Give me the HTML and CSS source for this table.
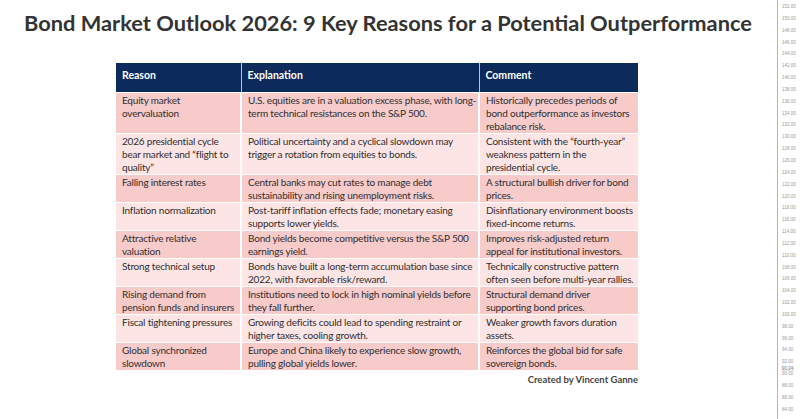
FILE: index.html
```html
<!DOCTYPE html>
<html lang="en">
<head>
<meta charset="utf-8">
<title>Bond Market Outlook 2026</title>
<link rel="stylesheet" href="styles.css">
</head>
<body>
<div class="page">
  <main class="content">
    <h1 class="title">Bond Market Outlook 2026: 9 Key Reasons for a Potential Outperformance</h1>
    <div class="table-wrap">
      <table class="reasons">
        <colgroup><col class="c1"><col class="c2"><col class="c3"></colgroup>
        <thead>
          <tr><th>Reason</th><th>Explanation</th><th>Comment</th></tr>
        </thead>
        <tbody>
          <tr class="dark"><td>Equity market<br>overvaluation</td><td>U.S. equities are in a valuation excess phase, with long-<br>term technical resistances on the S&amp;P 500.</td><td>Historically precedes periods of<br>bond outperformance as investors<br>rebalance risk.</td></tr>
          <tr class="light"><td>2026 presidential cycle<br>bear market and “flight to<br>quality”</td><td>Political uncertainty and a cyclical slowdown may<br>trigger a rotation from equities to bonds.</td><td>Consistent with the “fourth-year”<br>weakness pattern in the<br>presidential cycle.</td></tr>
          <tr class="dark"><td>Falling interest rates</td><td>Central banks may cut rates to manage debt<br>sustainability and rising unemployment risks.</td><td>A structural bullish driver for bond<br>prices.</td></tr>
          <tr class="light"><td>Inflation normalization</td><td>Post-tariff inflation effects fade; monetary easing<br>supports lower yields.</td><td>Disinflationary environment boosts<br>fixed-income returns.</td></tr>
          <tr class="dark"><td>Attractive relative<br>valuation</td><td>Bond yields become competitive versus the S&amp;P 500<br>earnings yield.</td><td>Improves risk-adjusted return<br>appeal for institutional investors.</td></tr>
          <tr class="light"><td>Strong technical setup</td><td>Bonds have built a long-term accumulation base since<br>2022, with favorable risk/reward.</td><td>Technically constructive pattern<br>often seen before multi-year rallies.</td></tr>
          <tr class="dark"><td>Rising demand from<br>pension funds and insurers</td><td>Institutions need to lock in high nominal yields before<br>they fall further.</td><td>Structural demand driver<br>supporting bond prices.</td></tr>
          <tr class="light"><td>Fiscal tightening pressures</td><td>Growing deficits could lead to spending restraint or<br>higher taxes, cooling growth.</td><td>Weaker growth favors duration<br>assets.</td></tr>
          <tr class="dark"><td>Global synchronized<br>slowdown</td><td>Europe and China likely to experience slow growth,<br>pulling global yields lower.</td><td>Reinforces the global bid for safe<br>sovereign bonds.</td></tr>
        </tbody>
      </table>
      <p class="credit">Created by Vincent Ganne</p>
    </div>
  </main>
  <aside class="axis">
    <span>152.00</span><span>150.00</span><span>148.00</span><span>146.00</span><span>144.00</span>
    <span>142.00</span><span>140.00</span><span>138.00</span><span>136.00</span><span>134.00</span>
    <span>132.00</span><span>130.00</span><span>128.00</span><span>126.00</span><span>124.00</span>
    <span>122.00</span><span>120.00</span><span>118.00</span><span>116.00</span><span>114.00</span>
    <span>112.00</span><span>110.00</span><span>108.00</span><span>106.00</span><span>104.00</span>
    <span>102.00</span><span>100.00</span><span>98.00</span><span>96.00</span><span>94.00</span>
    <span>92.00</span><span>90.00</span><span>88.00</span><span>86.00</span><span>84.00</span>
    <em class="price">91.24</em>
  </aside>
</div>
</body>
</html>
```
FILE: styles.css
```css
html, body {
  margin: 0;
  padding: 0;
  background: #ffffff;
}

body {
  font-family: Lato, "Open Sans", sans-serif;
  color: #333333;
}

.page {
  display: flex;
  height: 419px;
  overflow: hidden;
}

.content {
  flex: 1;
  min-width: 0;
}

.title {
  margin: 0;
  padding: 11px 0 0 24px;
  font-family: Lato, sans-serif;
  font-weight: 700;
  font-size: 21.8px;
  line-height: 24px;
  color: #333333;
  white-space: nowrap;
}

.table-wrap {
  width: 522px;
  margin: 28px 0 0 116px;
}

.reasons {
  width: 522px;
  border-collapse: collapse;
  table-layout: fixed;
}

.c1 { width: 125px; }
.c2 { width: 238px; }
.c3 { width: 159px; }

.reasons th {
  background: #0c2a5c;
  color: #ffffff;
  text-align: left;
  font-weight: 700;
  font-size: 10.5px;
  line-height: 13px;
  padding: 6px 6px 10px;
  border-left: 1px solid #b9c4da;
}

.reasons th:first-child {
  border-left: none;
}

.reasons td {
  vertical-align: top;
  font-size: 10px;
  letter-spacing: -0.2px;
  line-height: 13px;
  padding: 1px 5px 0 6px;
  color: #2e2e2e;
  white-space: nowrap;
  overflow: hidden;
  border-top: 1px solid #ffffff;
  border-left: 2px solid #ffffff;
}

.reasons td:first-child {
  border-left: none;
}

.dark td { background: #f8cbcb; }
.light td { background: #fde5e5; }

.credit {
  margin: 4px 0 0;
  text-align: right;
  font-weight: 700;
  font-size: 9.5px;
  line-height: 12px;
  color: #444444;
}

.axis {
  position: relative;
  width: 22px;
  flex: none;
  border-left: 1px solid #b5b5b5;
  display: flex;
  flex-direction: column;
  padding-top: 1px;
  font-family: "Liberation Sans", sans-serif;
}

.axis span {
  display: block;
  height: 11.85px;
  line-height: 11.85px;
  font-size: 4.5px;
  color: #9a9a9a;
  padding-left: 4px;
}

.axis .price {
  position: absolute;
  left: 3px;
  top: 365.5px;
  font-style: normal;
  font-size: 4.5px;
  line-height: 5px;
  padding: 0 1px;
  color: #8a8a8a;
  background: #eeeeee;
}
```
